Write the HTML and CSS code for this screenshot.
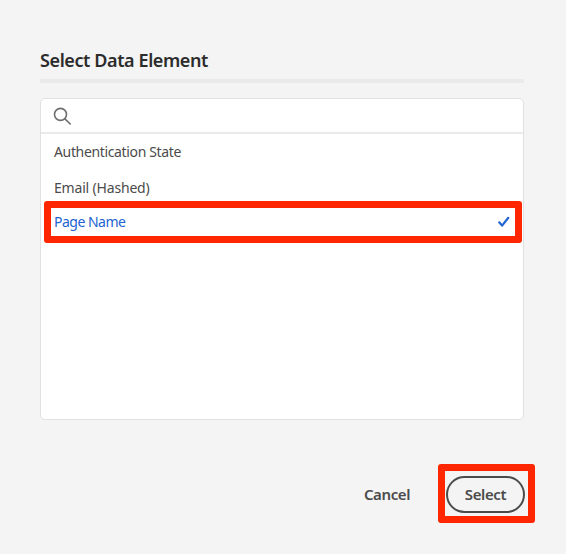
FILE: index.html
```html
<!DOCTYPE html>
<html lang="en">
<head>
<meta charset="utf-8">
<title>Select Data Element</title>
<link rel="stylesheet" href="styles.css">
</head>
<body>
<main class="dialog">
  <h1 class="title"><span>Select Data Element</span></h1>
  <section class="picker">
    <div class="search">
      <svg class="search-icon" width="20" height="20" viewBox="0 0 20 20"><circle cx="7.5" cy="7.4" r="6"/><path d="M11.9 11.8L17.3 17"/></svg>
    </div>
    <ul class="options">
      <li class="option"><span class="auth">Authentication State</span></li>
      <li class="option"><span class="email">Email (Hashed)</span></li>
      <li class="option selected"><span class="page">Page Name</span>
        <svg class="check" width="14" height="14" viewBox="0 0 14 14"><path d="M2.2 7.3L5.1 10.6L11.3 2.8"/></svg>
      </li>
    </ul>
  </section>
  <footer class="actions">
    <button class="button cancel"><span>Cancel</span></button>
    <div class="marked"><button class="button select"><span>Select</span></button></div>
  </footer>
</main>
</body>
</html>
```
FILE: styles.css
```css
* { box-sizing: border-box; }
body {
  margin: 0;
  background: #f4f4f4;
  color: #4b4b4b;
  font-family: "Noto Sans", "Open Sans", sans-serif;
  font-size: 14px;
}
.dialog { height: 554px; padding: 42px 42px 0 40px; overflow: hidden; }
.title {
  height: 41px;
  margin: 0 0 15px;
  border-bottom: 4px solid #eaeaea;
  color: #2c2c2c;
  font-size: 18px;
  font-weight: 600;
  line-height: 36px;
  letter-spacing: -0.4px;
}
.picker {
  height: 322px;
  border: 1px solid #e1e1e1;
  border-radius: 5px;
  background: #fff;
}
.search { height: 35px; padding: 8px 0 0 12px; border-bottom: 2px solid #eaeaea; }
.search-icon { display: block; fill: none; stroke: #6e6e6e; stroke-width: 1.6; stroke-linecap: round; }
.options { margin: 0; padding: 0; list-style: none; }
.option { height: 36px; padding-left: 13px; line-height: 36px; white-space: nowrap; }
.option:nth-child(2) { height: 31px; line-height: 35px; }
.auth { letter-spacing: -0.35px; }
.email { letter-spacing: -0.18px; }
.page { letter-spacing: -0.5px; }
.option.selected {
  display: flex;
  align-items: center;
  justify-content: space-between;
  width: 478px;
  height: 42px;
  margin-left: 3px;
  padding: 0 4px 0 3px;
  border: 7px solid #ff2600;
  border-radius: 3px;
  color: #2264d1;
  line-height: 28px;
}
.check { fill: none; stroke: #2264d1; stroke-width: 2.2; stroke-linecap: round; stroke-linejoin: round; }
.actions { display: flex; justify-content: flex-end; margin: 44px -11px 0 0; }
.button {
  height: 37px;
  padding: 0;
  border: 0;
  background: none;
  color: #4b4b4b;
  font: 600 15px/33px "Noto Sans", "Open Sans", sans-serif;
  letter-spacing: -0.4px;
}
.cancel { width: 80px; margin: 12px 11px 0 0; }
.marked {
  width: 97px;
  height: 59px;
  padding: 5px 0 0 1px;
  border: 7px solid #ff2600;
  border-radius: 3px;
}
.select { display: block; width: 79px; border: 2px solid #4b4b4b; border-radius: 19px; }
```
